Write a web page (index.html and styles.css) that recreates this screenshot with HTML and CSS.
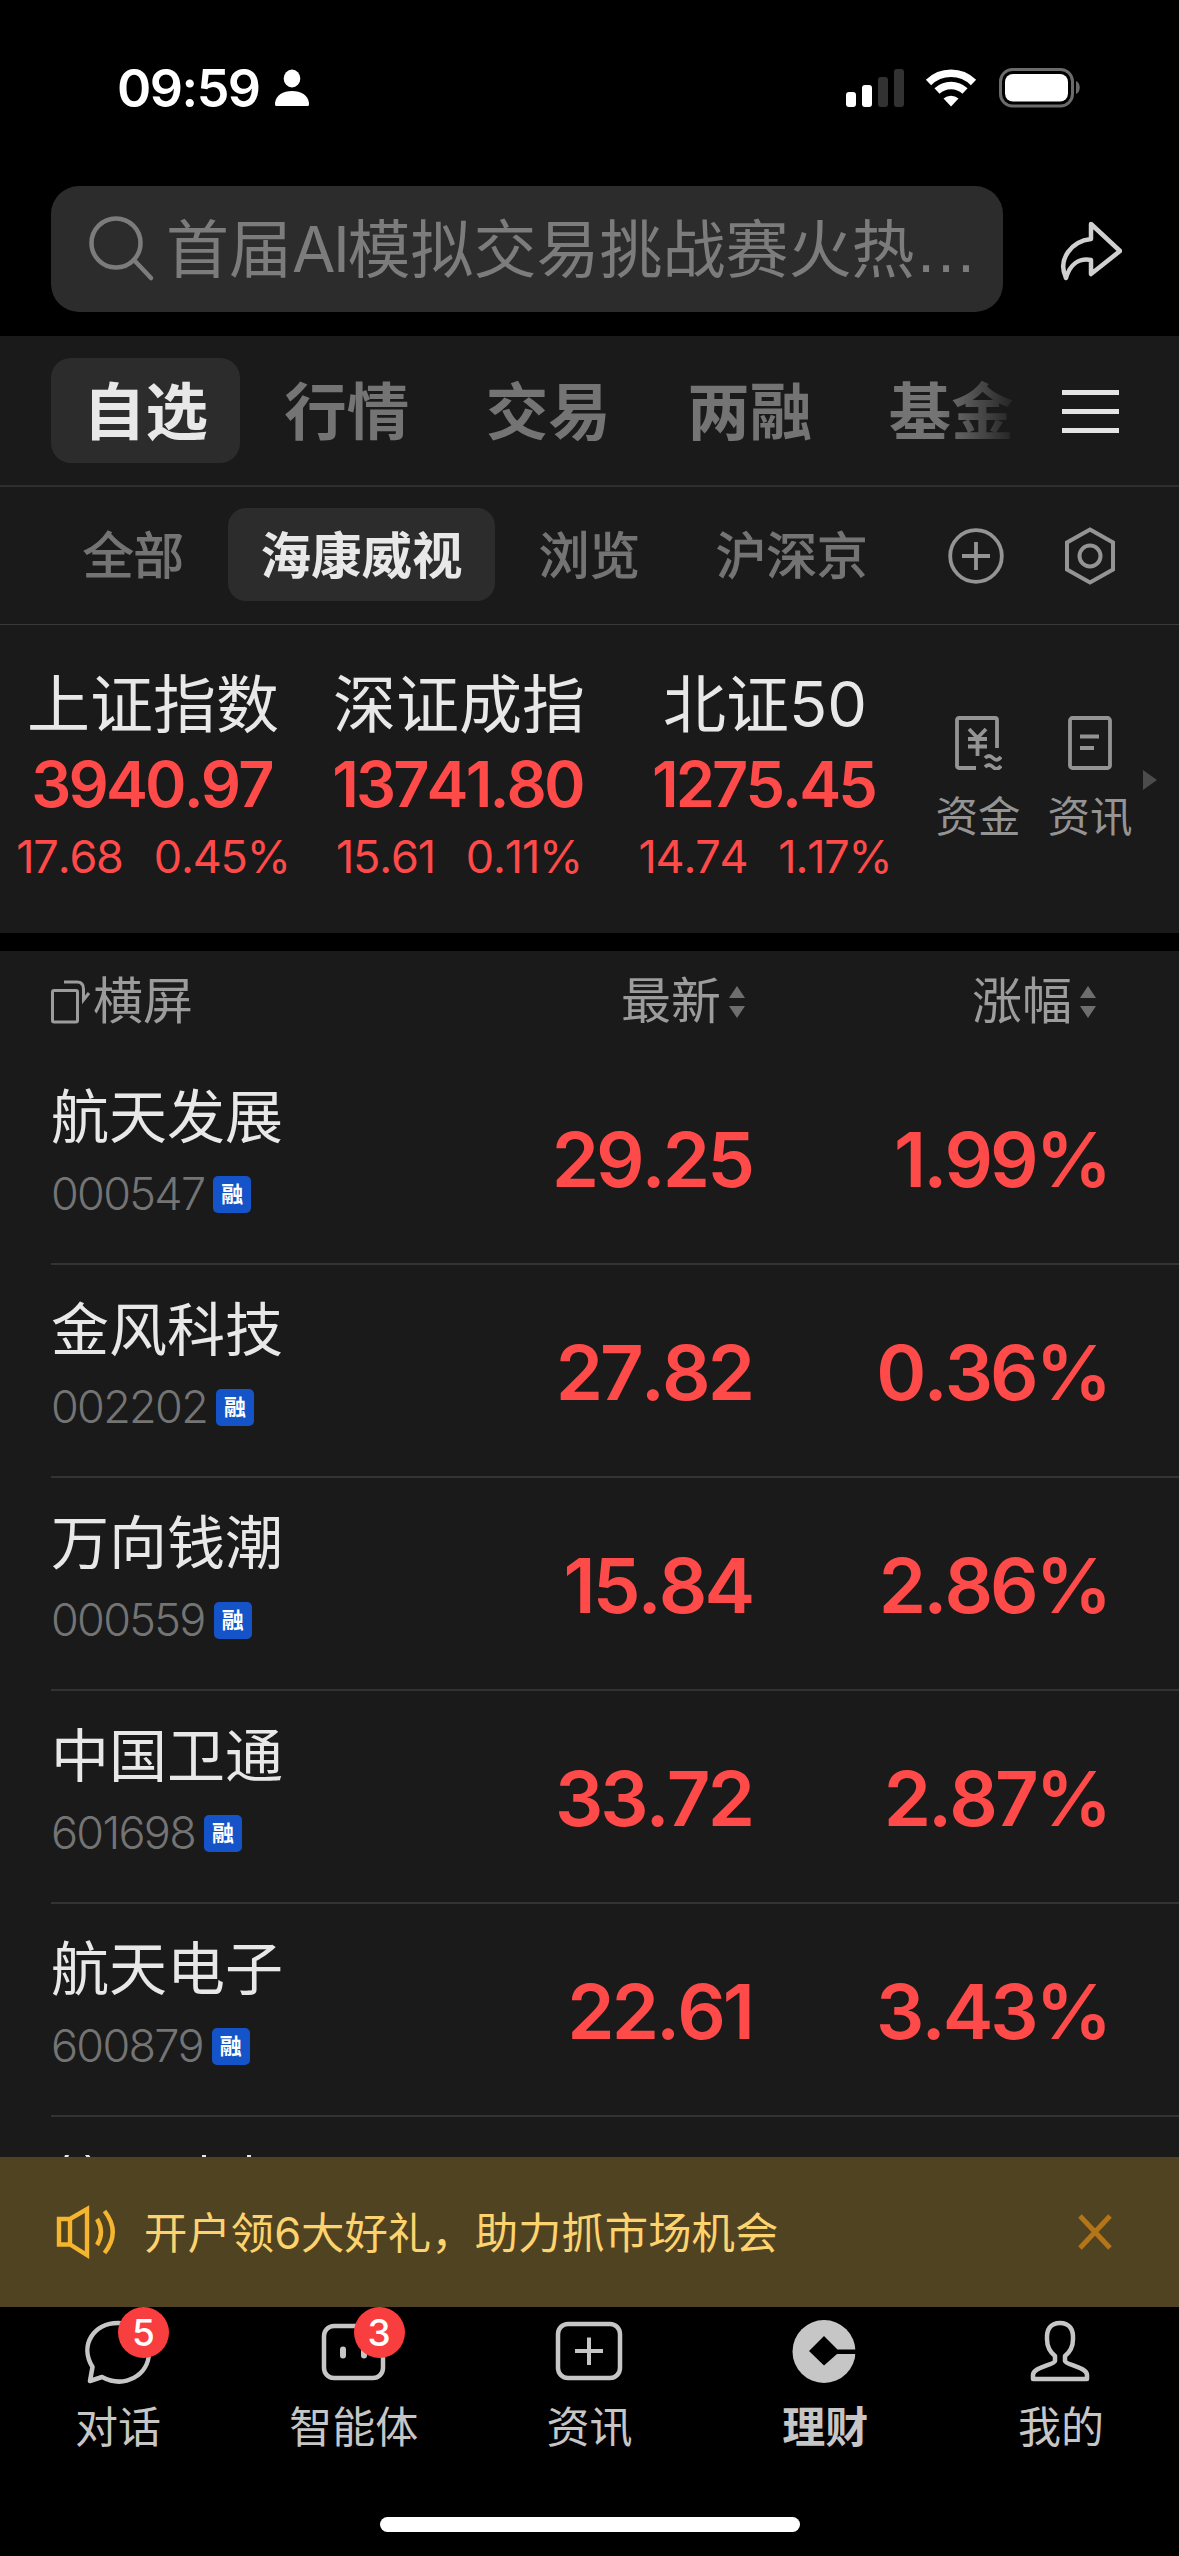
FILE: index.html
```html
<!DOCTYPE html>
<html lang="zh-CN">
<head>
<meta charset="utf-8">
<title>理财</title>
<link rel="stylesheet" href="styles.css">
</head>
<body>
<div class="app">
  <div class="status">
    <span class="clock">09:59</span>
    <svg class="status-user" width="34" height="38" viewBox="0 0 34 38" fill="#fff"><ellipse cx="17" cy="9.500" rx="8.300" ry="9"/><path d="M1 37C0 37 0 35 0 34C1 26 8 22 17 22S33 26 34 34C34 35 34 37 33 37Z"/></svg>
    <svg class="signal" width="60" height="38" viewBox="0 0 60 38"><g fill="#fff"><rect y="23" width="10" height="15" rx="3"/><rect x="16" y="16" width="10" height="22" rx="3"/></g><g fill="#323232"><rect x="32" y="8" width="10" height="30" rx="3"/><rect x="48" width="10" height="38" rx="3"/></g></svg>
    <svg class="wifi" width="52" height="38" viewBox="0 0 52 38" fill="none" stroke="#fff" stroke-width="7.500"><path d="M3.500 13.500A32 32 0 0 1 48.500 13.500"/><path d="M12 22A20.500 20.500 0 0 1 40 22"/><path d="M26 37.500L18.500 29.500A11.500 11.500 0 0 1 33.500 29.500Z" fill="#fff" stroke="none"/></svg>
    <svg class="battery" width="82" height="40" viewBox="0 0 82 40"><rect x="1.500" y="1.500" width="72" height="36.500" rx="12" fill="none" stroke="#6b6b6b" stroke-width="3"/><rect x="6" y="6" width="63" height="27.500" rx="8" fill="#fff"/><path d="M77 13C82 15 82 24 77 26Z" fill="#6b6b6b"/></svg>
  </div>

  <div class="search-row">
    <div class="search">
      <svg width="66" height="66" viewBox="0 0 66 66" fill="none" stroke="#7c7c7c" stroke-width="4.500" stroke-linecap="round"><circle cx="27" cy="27" r="24.500"/><path d="M45 44L62 62"/></svg>
      <span class="hint">首届<span class="latin">AI</span>模拟交易挑战赛火热<span class="dots">…</span></span>
    </div>
    <svg class="share" width="64" height="62" viewBox="0 0 64 62" fill="none" stroke="#d0d0d0" stroke-width="4.500" stroke-linejoin="round"><path d="M33 3L62 30L33 53V39C21 37 12 43 8 57C-1 38 14 20 33 18Z"/></svg>
  </div>

  <nav class="main-nav">
    <div class="main-tabs">
      <span class="main-tab active">自选</span><span class="main-tab">行情</span><span class="main-tab">交易</span><span class="main-tab">两融</span><span class="main-tab">基金</span>
    </div>
    <div class="burger"><i></i><i></i><i></i></div>
  </nav>

  <nav class="sub-nav">
    <span class="sub-tab">全部</span><span class="sub-tab active">海康威视</span><span class="sub-tab">浏览</span><span class="sub-tab">沪深京</span>
    <svg class="add" width="56" height="56" viewBox="0 0 56 56" fill="none" stroke="#949494" stroke-width="3.800"><circle cx="28" cy="28" r="25.800"/><path d="M28 14V42M14 28H42"/></svg>
    <svg class="gear" width="52" height="58" viewBox="0 0 52 58" fill="none" stroke="#949494" stroke-width="4"><path d="M26 2.500L49 15.500V42.500L26 55.500L3 42.500V15.500Z"/><circle cx="26" cy="29" r="10.500"/></svg>
  </nav>

  <section class="indices">
    <div class="index"><div class="index-name">上证指数</div><div class="index-value">3940.97</div><div class="index-change"><span>17.68</span><span>0.45%</span></div></div>
    <div class="index"><div class="index-name">深证成指</div><div class="index-value">13741.80</div><div class="index-change"><span>15.61</span><span>0.11%</span></div></div>
    <div class="index"><div class="index-name">北证50</div><div class="index-value">1275.45</div><div class="index-change"><span>14.74</span><span>1.17%</span></div></div>
    <div class="shortcut">
      <svg width="48" height="54" viewBox="0 0 48 54" fill="none" stroke="#949494" stroke-width="3.800" stroke-linejoin="round"><path d="M22 52H5Q3 52 3 50V4Q3 2 5 2H41Q43 2 43 4V32"/><path d="M15 13L23.500 22L32 13M14 23H33M14 30.500H33M23.500 22V40"/><path d="M31 42Q35 38 39 42T47 41M31 51Q35 47 39 51T47 50"/></svg>
      <span>资金</span>
    </div>
    <div class="shortcut">
      <svg width="44" height="54" viewBox="0 0 44 54" fill="none" stroke="#949494" stroke-width="3.800"><rect x="2" y="2" width="40" height="50" rx="2.500"/><path d="M12 20.500H31M12 32H26"/></svg>
      <span>资讯</span>
    </div>
    <svg class="more" width="14" height="20" viewBox="0 0 14 20"><path d="M0 0L14 10L0 20Z" fill="#4c4c4c"/></svg>
  </section>

  <section class="list">
    <div class="list-head">
      <div class="rotate"><svg width="40" height="46" viewBox="0 0 40 46" fill="none" stroke="#9c9c9c" stroke-width="3"><rect x="1.500" y="11.500" width="25" height="31.500" rx="1.500"/><path d="M13 3H26Q32.500 3 32.500 10V20M38 14L32.500 21V10"/></svg><span>横屏</span></div>
      <div class="sort">最新<svg width="16" height="32" viewBox="0 0 16 32" fill="#6e6e6e"><path d="M8 0L16 12H0ZM0 20H16L8 32Z"/></svg></div>
      <div class="sort">涨幅<svg width="16" height="32" viewBox="0 0 16 32" fill="#6e6e6e"><path d="M8 0L16 12H0ZM0 20H16L8 32Z"/></svg></div>
    </div>
    <div class="row"><div class="stock"><div class="name">航天发展</div><div class="code">000547<b>融</b></div></div><div class="price">29.25</div><div class="pct">1.99%</div></div>
    <div class="row"><div class="stock"><div class="name">金风科技</div><div class="code">002202<b>融</b></div></div><div class="price">27.82</div><div class="pct">0.36%</div></div>
    <div class="row"><div class="stock"><div class="name">万向钱潮</div><div class="code">000559<b>融</b></div></div><div class="price">15.84</div><div class="pct">2.86%</div></div>
    <div class="row"><div class="stock"><div class="name">中国卫通</div><div class="code">601698<b>融</b></div></div><div class="price">33.72</div><div class="pct">2.87%</div></div>
    <div class="row"><div class="stock"><div class="name">航天电子</div><div class="code">600879<b>融</b></div></div><div class="price">22.61</div><div class="pct">3.43%</div></div>
    <div class="row peek"><svg width="195" height="3" viewBox="0 0 195 3" fill="#e8e8e8"><path d="M1 3L2 0H6L5 3ZM22 0H26L28 3H24ZM139 0H143V3H139ZM184 0H188V3H184Z"/></svg></div>
  </section>

  <aside class="banner">
    <svg width="60" height="54" viewBox="0 0 60 54" fill="none" stroke="#f5b52e" stroke-width="4.400"><path d="M3 14H14L31 4V50L14 39.500H3ZM14 14V39.500M41 14Q49 27 41 40M48.500 6Q65 27 48.500 48"/></svg>
    <span>开户领6大好礼，助力抓市场机会</span>
    <svg class="close" width="34" height="36" viewBox="0 0 34 36" fill="none" stroke="#b37517" stroke-width="5"><path d="M2 2L32 34M32 2L2 34"/></svg>
  </aside>

  <footer class="tabbar">
    <div class="tab">
      <div class="icon"><svg width="68" height="66" viewBox="0 0 68 66" fill="none" stroke="#c6c6c6" stroke-width="4.500" stroke-linejoin="round"><path d="M6 61L8.500 47C-5 25 10 3 34 3C52 3 65 16 65 32C65 55 41 69 18 57Z"/></svg><em>5</em></div>
      <span>对话</span>
    </div>
    <div class="tab">
      <div class="icon"><svg width="68" height="66" viewBox="0 0 68 66" fill="none" stroke="#c6c6c6" stroke-width="4.500"><rect x="4" y="6" width="59" height="52" rx="10"/><path d="M23 29.500V35.500M44 29.500V35.500" stroke-width="6" stroke-linecap="round"/></svg><em>3</em></div>
      <span>智能体</span>
    </div>
    <div class="tab">
      <div class="icon"><svg width="68" height="66" viewBox="0 0 68 66" fill="none" stroke="#c6c6c6" stroke-width="4.500"><rect x="3" y="4" width="62" height="54" rx="10"/><path d="M34 17.500V45M20 31H48" stroke-width="4"/></svg></div>
      <span>资讯</span>
    </div>
    <div class="tab current">
      <div class="icon"><svg width="68" height="66" viewBox="0 0 68 66"><circle cx="33" cy="31.500" r="31.500" fill="#c6c6c6"/><path d="M18 31L33 16L46.500 29.500H66V34H46L33 45.500Z" fill="#000"/></svg></div>
      <span>理财</span>
    </div>
    <div class="tab">
      <div class="icon"><svg width="68" height="66" viewBox="0 0 68 66" fill="none" stroke="#c6c6c6" stroke-width="4.500" stroke-linejoin="round"><path d="M33 3C23 3 19.500 10 20 19C20 27 23 32 28 36V41C27 45 6 47 6 55V59H60V55C60 47 39 45 38 41V36C43 32 46 27 46 19C46.500 10 43 3 33 3Z"/></svg></div>
      <span>我的</span>
    </div>
  </footer>
  <div class="home"></div>
</div>
</body>
</html>
```
FILE: styles.css
```css
* { box-sizing: border-box; }
body { margin: 0; background: #000; }
svg { display: block; flex: none; }
.app {
  width: 1179px; height: 2556px; overflow: hidden;
  display: flex; flex-direction: column;
  background: #000; color: #e8e8e8;
  font-family: Inter, "Noto Sans CJK SC", sans-serif;
}
.app > * { flex: none; }

.status { height: 186px; display: flex; align-items: flex-start; padding: 68px 98px 0 117px; }
.clock { font-size: 52px; font-weight: 600; line-height: 41px; color: #fff; width: 158px; letter-spacing: -1.500px; }
.signal { margin: 1px 0 0 537px; }
.status-user { margin-top: 1px; }
.wifi { margin: 1px 0 0 19px; }
.battery { margin-left: 22px; }

.search-row { height: 150px; display: flex; align-items: flex-start; padding-left: 51px; }
.search { width: 952px; height: 126px; border-radius: 28px; background: #2c2c2c; display: flex; align-items: center; padding-left: 38px; gap: 11px; }
.hint { font-size: 63px; line-height: 126px; color: #7c7c7c; white-space: nowrap; }
.latin { letter-spacing: -2.500px; }
.dots { font-family: "Liberation Sans", sans-serif; line-height: 1; }
.share { margin: 35px 0 0 55px; }

.main-nav { height: 151px; background: #1a1a1a; border-bottom: 2px solid #2e2e2e; display: flex; align-items: center; padding-left: 51px; }
.main-tabs { width: 972px; overflow: hidden; display: flex; -webkit-mask-image: linear-gradient(90deg, #000 890px, transparent 972px); mask-image: linear-gradient(90deg, #000 890px, transparent 972px); }
.main-tab { flex: none; width: 201.500px; height: 105px; padding-top: 2px; font-size: 62.500px; font-weight: 600; line-height: 105px; color: #747474; text-align: center; }
.main-tab.active { width: 189px; margin-right: 6px; background: #2c2c2c; border-radius: 20px; color: #e8e8e8; }
.burger { margin: 2px 0 0 39px; width: 57px; display: grid; gap: 14px; }
.burger i { height: 5px; background: #e4e4e4; }

.sub-nav { height: 138px; background: #1a1a1a; border-bottom: 1px solid #3a3a3a; display: flex; align-items: flex-start; padding: 21px 0 0 83px; }
.sub-tab { height: 93px; font-size: 50.500px; line-height: 95px; color: #747474; white-space: nowrap; -webkit-text-stroke: 1.200px #747474; }
.sub-tab.active { width: 267px; margin: 0 44px; text-align: center; background: #2c2c2c; border-radius: 18px; color: #e8e8e8; font-weight: 600; -webkit-text-stroke: 0; }
.sub-tab.active + .sub-tab { margin-right: 76px; }
.add { margin: 20px 0 0 80px; }
.gear { margin: 19px 0 0 60px; }

.indices { height: 308px; background: #1a1a1a; display: flex; align-items: flex-start; }
.index { width: 306px; text-align: center; white-space: nowrap; padding-top: 45px; }
.index-name { font-size: 63px; line-height: 68px; }
.index-value { font-size: 63px; line-height: 92px; font-weight: 600; color: #ff4a4a; letter-spacing: -2.900px; padding-right: 3px; font-kerning: none; }
.index-change { font-size: 45px; line-height: 54px; color: #ff4a4a; display: flex; justify-content: center; gap: 31px; letter-spacing: -1.200px; font-kerning: none; }
.shortcut { width: 112px; padding-top: 91px; display: flex; flex-direction: column; align-items: center; color: #949494; font-size: 42.500px; line-height: 50px; gap: 22px; margin-left: 4px; }
.shortcut + .shortcut { margin-left: 0; }
.more { margin: 145px 0 0 -3px; }

.list { height: 1206px; margin-top: 18px; background: #1a1a1a; overflow: hidden; }
.list-head { height: 101px; padding-left: 51px; display: flex; font-size: 50px; line-height: 101px; color: #9c9c9c; }
.rotate { flex: none; width: 570px; display: flex; align-items: center; gap: 2px; }
.sort { flex: none; width: 351px; display: flex; align-items: center; gap: 8px; white-space: nowrap; }
.row { height: 213px; margin-left: 51px; border-bottom: 2px solid #333; display: flex; align-items: flex-start; white-space: nowrap; }
.stock { width: 400px; padding-top: 28px; }
.name { font-size: 58px; line-height: 74px; }
.code { display: flex; align-items: center; gap: 9px; margin-top: 15px; font-size: 45px; line-height: 50px; color: #747474; font-weight: 300; letter-spacing: -1.700px; }
.code b { width: 38px; height: 37px; border-radius: 5px; background: #1554c8; color: #fff; font-size: 22px; line-height: 37px; font-weight: 700; text-align: center; letter-spacing: 0; }
.price, .pct { font-size: 76px; line-height: 100px; padding-top: 57px; font-weight: 600; color: #ff4a4a; text-align: right; letter-spacing: -3px; font-kerning: none; }
.price { width: 301px; }
.pct { width: 357px; }
.peek { border: 0; padding: 38px 0 0 12px; height: 42px; }

.banner { height: 150px; background: #504321; display: flex; align-items: center; padding-left: 56px; }
.banner span { margin-left: 28px; width: 934px; font-size: 43.400px; color: #fcd36f; white-space: nowrap; line-height: 60px; padding-top: 1px; }

.tabbar { height: 210px; display: grid; grid-template-columns: repeat(5, 1fr); }
.tab { display: flex; flex-direction: column; align-items: center; padding-top: 13px; font-size: 43px; line-height: 60px; color: #c6c6c6; }
.current { font-weight: 700; }
.icon { position: relative; margin-bottom: 11px; }
.icon em { position: absolute; left: 34px; top: -13px; width: 51px; height: 51px; border-radius: 50%; background: #f83e3e; color: #fff; font: 500 37px/51px Inter, sans-serif; text-align: center; }
.home { width: 420px; height: 15px; border-radius: 8px; background: #fff; align-self: center; }
```
